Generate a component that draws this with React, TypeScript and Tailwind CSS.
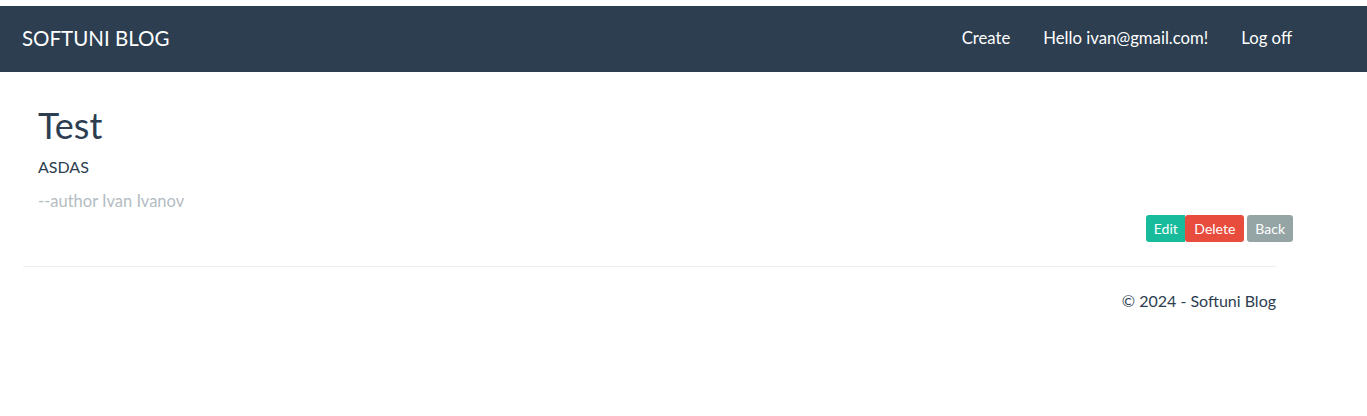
import React from 'react';

export default function App() {
    return (
        <div className="min-h-screen bg-white font-['Lato','Liberation_Sans',sans-serif] text-[#2c3e50]">
            <nav className="mt-[6px] h-[66px] bg-[#2c3e50] flex items-center justify-between pl-[22px] pr-[75px] text-white">
                <a href="#" className="text-[20.5px] leading-none pb-[2px]">SOFTUNI BLOG</a>
                <ul className="flex items-center gap-[33px] text-[16.7px] leading-none pb-[2px]">
                    <li><a href="#">Create</a></li>
                    <li><a href="#">Hello ivan@gmail.com!</a></li>
                    <li><a href="#">Log off</a></li>
                </ul>
            </nav>

            <main className="pl-[38px] pr-[74px] pt-[33px]">
                <h2 className="text-[36px] leading-[40px]">Test</h2>
                <p className="mt-[11px] text-[16px] leading-[21px]">ASDAS</p>
                <p className="mt-[14px] text-[16.5px] leading-[21px] text-[#b4bcc2]">--author Ivan Ivanov</p>
                <div className="flex justify-end mt-[3px]">
                    <a href="#" className="h-[27px] px-[7.5px] flex items-center text-[14px] text-white bg-[#18bc9c] rounded-l-[3px]">Edit</a>
                    <a href="#" className="h-[27px] px-[9px] flex items-center text-[14px] text-white bg-[#e74c3c] rounded-[3px]">Delete</a>
                    <a href="#" className="ml-[3px] h-[27px] px-[8px] flex items-center text-[14px] text-white bg-[#95a5a6] rounded-[3px]">Back</a>
                </div>
            </main>

            <footer className="ml-[23px] w-[1253px] mt-[24px]">
                <hr className="border-t border-[#ecf0f1]" />
                <p className="mt-[23px] text-right text-[16px] leading-[21px]">© 2024 - Softuni Blog</p>
            </footer>
        </div>
    );
}
